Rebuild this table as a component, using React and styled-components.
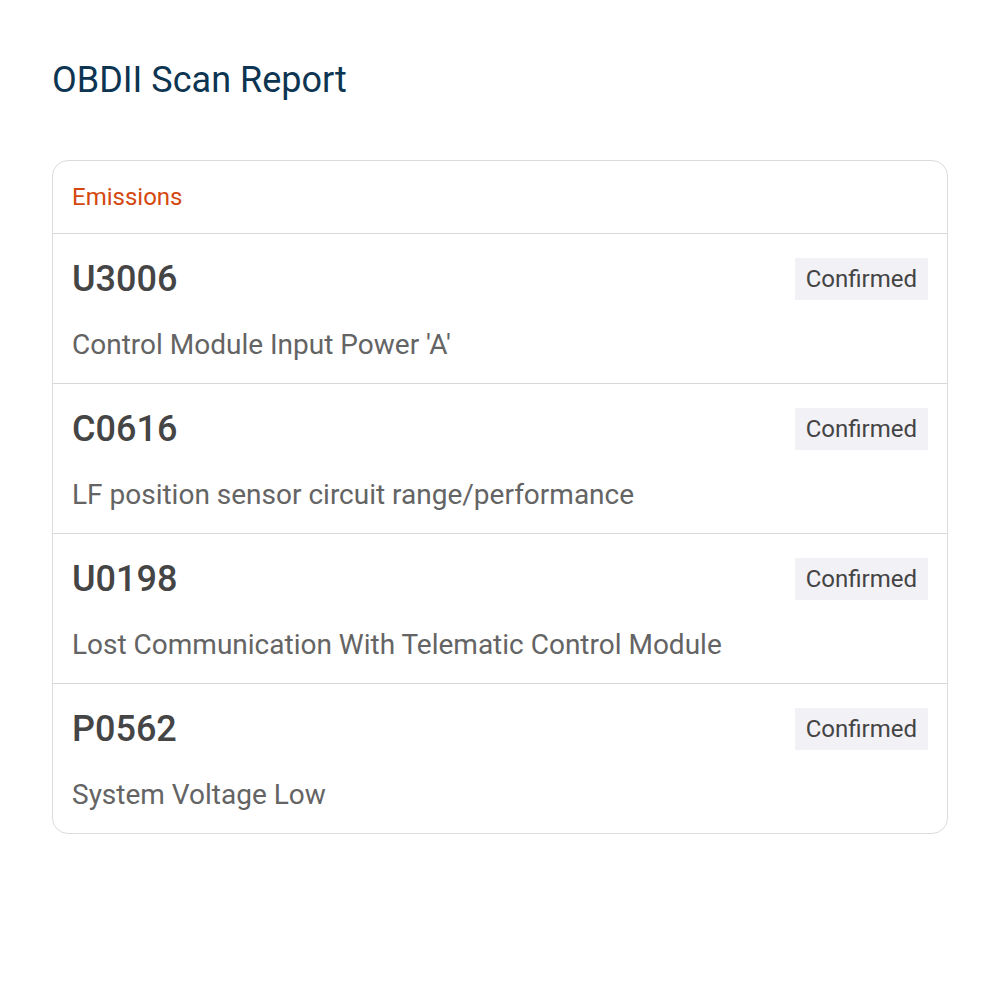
import React from 'react';
import styled, { createGlobalStyle } from 'styled-components';

const GlobalStyle = createGlobalStyle`
  body {
    margin: 0;
    background: #fff;
    font-family: Roboto, "Liberation Sans", sans-serif;
  }
`;

const Page = styled.div`
  padding: 58px 52px 40px;
`;

const Title = styled.h1`
  margin: 0 0 58px;
  font-size: 36px;
  line-height: 44px;
  font-weight: 400;
  color: #0d3552;
`;

const Card = styled.div`
  border: 1px solid #dcdcdc;
  border-radius: 16px;
  overflow: hidden;
`;

const CardHeader = styled.div`
  padding: 0 19px;
  height: 72px;
  display: flex;
  align-items: center;
  font-size: 24px;
  color: #d4480f;
  border-bottom: 1px solid #d8d8d8;
`;

const Row = styled.div`
  padding: 24px 19px 22px;
  border-bottom: ${(p) => (p.last ? 'none' : '1px solid #d8d8d8')};
`;

const RowTop = styled.div`
  display: flex;
  align-items: center;
  justify-content: space-between;
  height: 42px;
`;

const Code = styled.div`
  font-size: 36px;
  font-weight: 500;
  color: #454545;
`;

const Badge = styled.span`
  background: #f2f1f6;
  color: #444;
  font-size: 24px;
  padding: 0 11px;
  height: 42px;
  display: inline-flex;
  align-items: center;
`;

const Description = styled.div`
  margin-top: 29px;
  font-size: 28px;
  line-height: 32px;
  color: #646464;
`;

const codes = [
  { code: 'U3006', desc: "Control Module Input Power 'A'" },
  { code: 'C0616', desc: 'LF position sensor circuit range/performance' },
  { code: 'U0198', desc: 'Lost Communication With Telematic Control Module' },
  { code: 'P0562', desc: 'System Voltage Low' },
];

export default function App() {
  return (
    <>
      <GlobalStyle />
      <Page>
        <Title>OBDII Scan Report</Title>
        <Card>
          <CardHeader>Emissions</CardHeader>
          {codes.map((c, i) => (
            <Row key={c.code} last={i === codes.length - 1}>
              <RowTop>
                <Code>{c.code}</Code>
                <Badge>Confirmed</Badge>
              </RowTop>
              <Description>{c.desc}</Description>
            </Row>
          ))}
        </Card>
      </Page>
    </>
  );
}
